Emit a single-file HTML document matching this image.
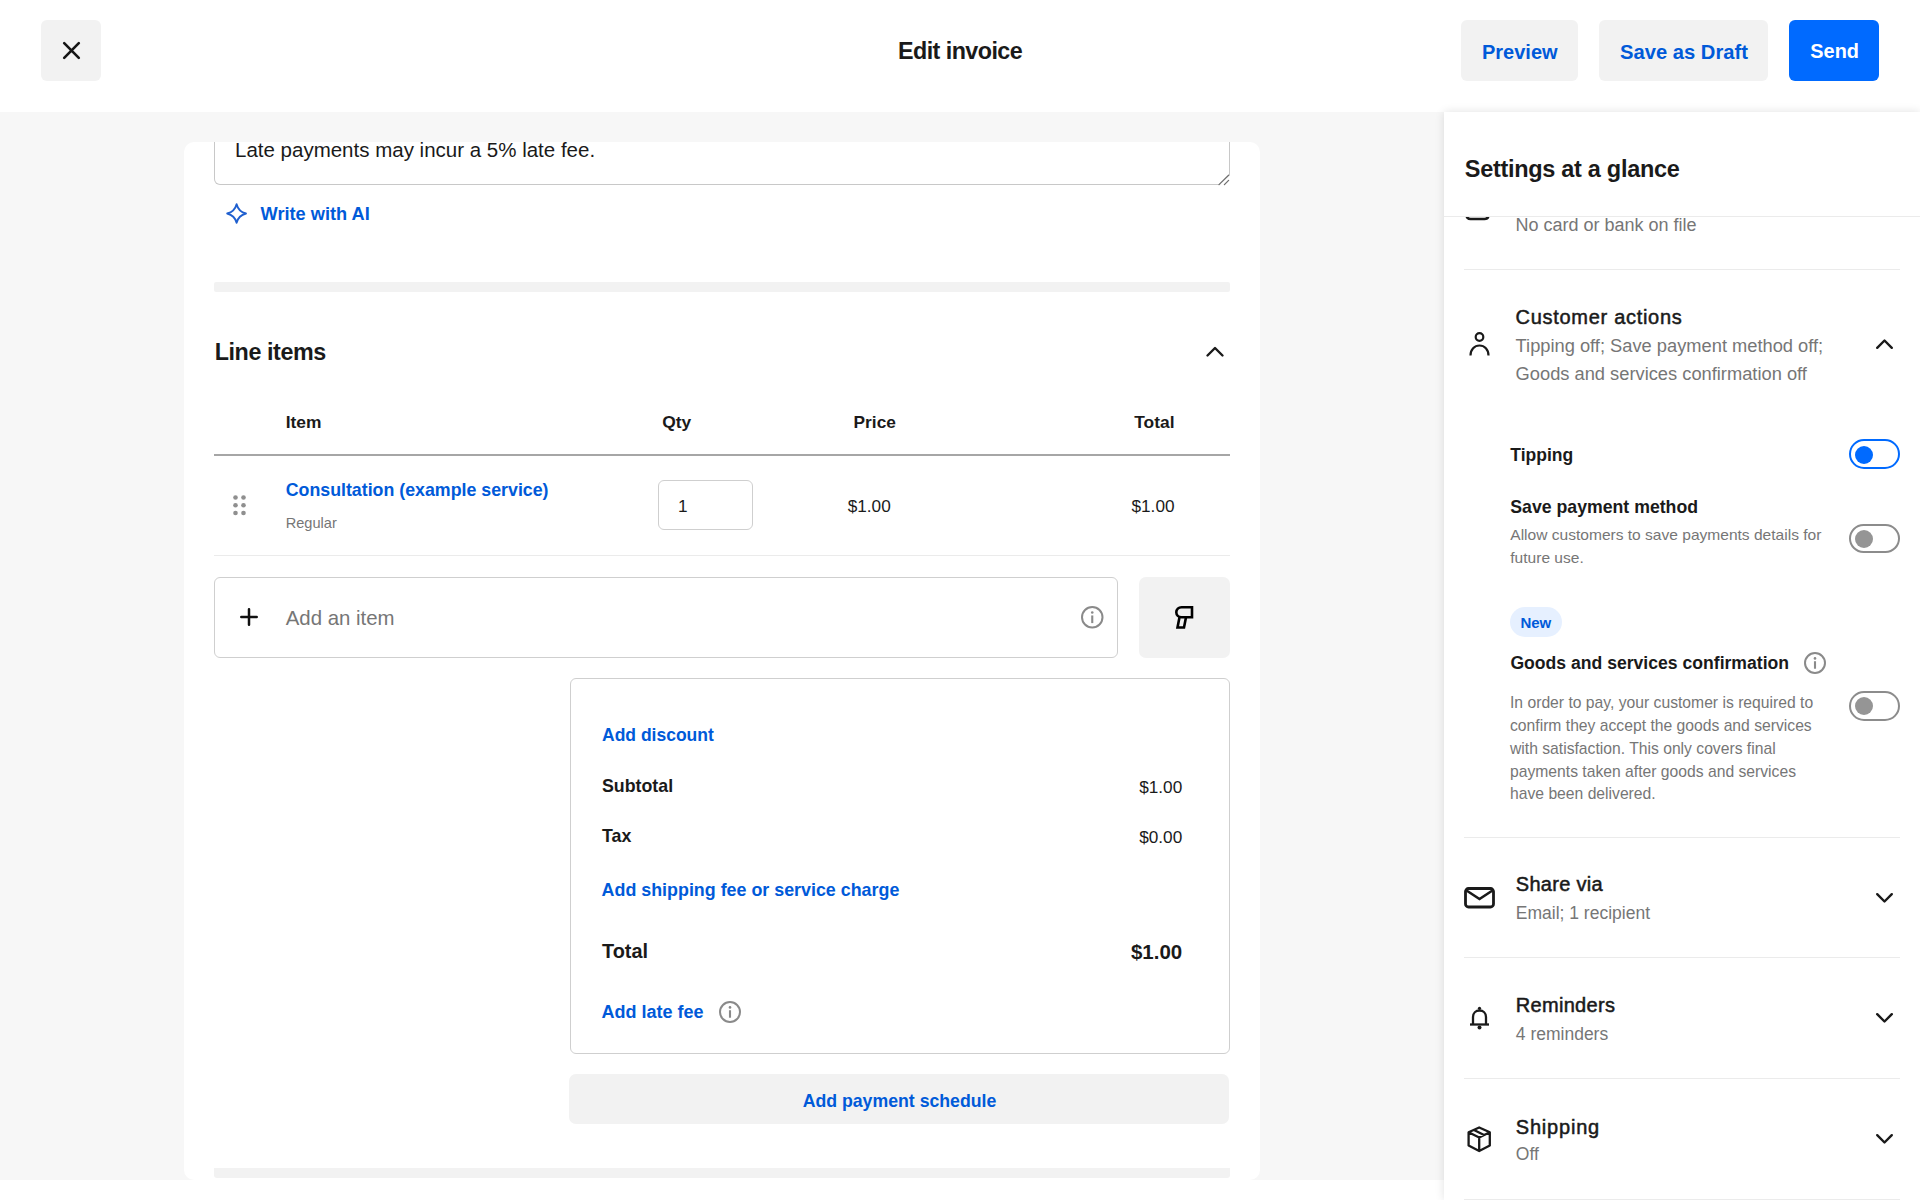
<!DOCTYPE html>
<html><head><meta charset="utf-8"><title>Edit invoice</title>
<style>
html,body{margin:0;padding:0;width:1920px;height:1200px;overflow:hidden;background:#fff;position:relative}
body{font-family:"Liberation Sans",sans-serif}
.t{position:absolute;white-space:nowrap;font-family:"Liberation Sans",sans-serif}
</style></head><body>
<div style="position:absolute;left:0px;top:0px;width:1920px;height:112px;background:#fff"></div>
<div style="position:absolute;left:41px;top:20px;width:60px;height:61px;background:#f2f2f2;border-radius:6px"></div>
<svg style="position:absolute;left:62.5px;top:42px;overflow:visible" width="17" height="17" viewBox="0 0 17 17"><path d="M1.2 1.2L15.8 15.8M15.8 1.2L1.2 15.8" stroke="#151515" stroke-width="2.6" fill="none" stroke-linecap="round"/></svg>
<div class="t" style="left:898.00px;top:39.98px;font-size:23.3px;line-height:23.3px;font-weight:700;color:#1a1a1a;letter-spacing:-0.55px">Edit invoice</div>
<div style="position:absolute;left:1461px;top:20px;width:117px;height:61px;background:#f2f2f2;border-radius:6px"></div>
<div class="t" style="left:1482.00px;top:41.77px;font-size:20px;line-height:20px;font-weight:700;color:#005ad9;">Preview</div>
<div style="position:absolute;left:1599px;top:20px;width:169px;height:61px;background:#f2f2f2;border-radius:6px"></div>
<div class="t" style="left:1620.00px;top:41.60px;font-size:20.2px;line-height:20.2px;font-weight:700;color:#005ad9;">Save as Draft</div>
<div style="position:absolute;left:1789px;top:20px;width:90px;height:61px;background:#006aff;border-radius:6px"></div>
<div class="t" style="left:1810.30px;top:41.85px;font-size:19.9px;line-height:19.9px;font-weight:700;color:#fff;">Send</div>
<div style="position:absolute;left:0px;top:112px;width:1444px;height:1068px;background:#f7f7f7"></div>
<div style="position:absolute;left:184px;top:142px;width:1076px;height:1038px;background:#fff;border-radius:10px"></div>
<div style="position:absolute;left:214px;top:130px;width:1016px;height:55px;border:1px solid #c8c8c8;border-top:none;border-radius:0 0 0 6px;box-sizing:border-box"></div>
<div style="position:absolute;left:184px;top:130px;width:1076px;height:12px;background:#f7f7f7"></div>
<svg style="position:absolute;left:1214px;top:170px;overflow:visible" width="17" height="17" viewBox="0 0 17 17"><path d="M16.5 4.5V17H3.5Z" fill="#fff"/><path d="M14.6 5.2L5 14.6M14.6 10.4L10.4 14.6" stroke="#6f6f6f" stroke-width="1.3" fill="none" stroke-linecap="round"/></svg>
<div class="t" style="left:235.00px;top:140.35px;font-size:20.5px;line-height:20.5px;font-weight:400;color:#1a1a1a;">Late payments may incur a 5% late fee.</div>
<svg style="position:absolute;left:226px;top:203px;overflow:visible" width="21" height="21" viewBox="0 0 21 21"><path d="M10.6 1.2 Q12.5 8.6 20 10.5 Q12.5 12.4 10.6 19.8 Q8.7 12.4 1.2 10.5 Q8.7 8.6 10.6 1.2Z" stroke="#1f5fcf" stroke-width="1.9" fill="none" stroke-linejoin="round"/></svg>
<div class="t" style="left:260.60px;top:204.89px;font-size:18.2px;line-height:18.2px;font-weight:700;color:#005ad9;">Write with AI</div>
<div style="position:absolute;left:214px;top:282px;width:1016px;height:10px;background:#f2f2f2;border-radius:2px"></div>
<div class="t" style="left:214.70px;top:340.98px;font-size:23.3px;line-height:23.3px;font-weight:700;color:#1a1a1a;letter-spacing:-0.4px">Line items</div>
<svg style="position:absolute;left:1206px;top:346px;overflow:visible" width="18" height="11" viewBox="0 0 18 11"><path d="M1.5 9.5L9 2L16.5 9.5" stroke="#1a1a1a" stroke-width="2.4" fill="none" stroke-linecap="round" stroke-linejoin="round"/></svg>
<div class="t" style="left:285.70px;top:413.97px;font-size:17.4px;line-height:17.4px;font-weight:700;color:#1a1a1a;">Item</div>
<div class="t" style="left:662.20px;top:413.97px;font-size:17.4px;line-height:17.4px;font-weight:700;color:#1a1a1a;">Qty</div>
<div class="t" style="left:853.60px;top:414.06px;font-size:17.3px;line-height:17.3px;font-weight:700;color:#1a1a1a;">Price</div>
<div class="t" style="right:745.50px;top:413.97px;font-size:17.4px;line-height:17.4px;font-weight:700;color:#1a1a1a;">Total</div>
<div style="position:absolute;left:214px;top:454px;width:1016px;height:2px;background:#a6a6a6"></div>
<svg style="position:absolute;left:233px;top:495px;overflow:visible" width="13" height="21" viewBox="0 0 13 21"><circle cx="2.5" cy="2.5" r="2.3" fill="#8f8f8f"/><circle cx="2.5" cy="10.300000000000011" r="2.3" fill="#8f8f8f"/><circle cx="2.5" cy="18" r="2.3" fill="#8f8f8f"/><circle cx="10.5" cy="2.5" r="2.3" fill="#8f8f8f"/><circle cx="10.5" cy="10.300000000000011" r="2.3" fill="#8f8f8f"/><circle cx="10.5" cy="18" r="2.3" fill="#8f8f8f"/></svg>
<div class="t" style="left:285.70px;top:481.93px;font-size:17.8px;line-height:17.8px;font-weight:700;color:#005ad9;">Consultation (example service)</div>
<div class="t" style="left:285.70px;top:516.34px;font-size:14.6px;line-height:14.6px;font-weight:400;color:#767676;">Regular</div>
<div style="position:absolute;left:658px;top:480px;width:95px;height:50px;border:1px solid #cfcfcf;border-radius:6px;box-sizing:border-box"></div>
<div class="t" style="left:678.00px;top:498.14px;font-size:17.2px;line-height:17.2px;font-weight:400;color:#1a1a1a;">1</div>
<div class="t" style="left:847.70px;top:498.14px;font-size:17.2px;line-height:17.2px;font-weight:400;color:#1a1a1a;">$1.00</div>
<div class="t" style="right:745.50px;top:497.64px;font-size:17.2px;line-height:17.2px;font-weight:400;color:#1a1a1a;">$1.00</div>
<div style="position:absolute;left:214px;top:555px;width:1016px;height:1px;background:#ebebeb"></div>
<div style="position:absolute;left:214px;top:577px;width:904px;height:81px;border:1px solid #cfcfcf;border-radius:6px;box-sizing:border-box"></div>
<svg style="position:absolute;left:240.3px;top:608px;overflow:visible" width="18" height="18" viewBox="0 0 18 18"><path d="M9 1.3V16.7M1.3 9H16.7" stroke="#111" stroke-width="2.5" fill="none" stroke-linecap="round"/></svg>
<div class="t" style="left:285.70px;top:608.43px;font-size:20.4px;line-height:20.4px;font-weight:400;color:#767676;">Add an item</div>
<svg style="position:absolute;left:1081.3px;top:605.8px;overflow:visible" width="22.5" height="22.5" viewBox="0 0 22.5 22.5"><circle cx="11.25" cy="11.25" r="10.25" stroke="#8a8a8a" stroke-width="2" fill="none"/><rect x="10.2" y="9.45" width="2.1" height="7.65" fill="#8a8a8a"/><circle cx="11.25" cy="6.5249999999999995" r="1.3" fill="#8a8a8a"/></svg>
<div style="position:absolute;left:1138.6px;top:576.6px;width:91.10000000000014px;height:81.0px;background:#f2f2f2;border-radius:7px"></div>
<svg style="position:absolute;left:1175px;top:606px;overflow:visible" width="18" height="23" viewBox="0 0 18 23"><path d="M17 1.2H6.5C3.6 1.2 1.3 3.4 1.3 6.2C1.3 9 3.6 11.2 6.5 11.2H17Z" stroke="#000" stroke-width="2.6" fill="none" stroke-linejoin="miter"/><path d="M4.5 11.2L2.5 21.5H9L11 11.2" stroke="#000" stroke-width="2.6" fill="none"/></svg>
<div style="position:absolute;left:570px;top:678px;width:660px;height:376px;border:1px solid #cfcfcf;border-radius:6px;box-sizing:border-box"></div>
<div class="t" style="left:602.00px;top:727.39px;font-size:17.5px;line-height:17.5px;font-weight:700;color:#005ad9;">Add discount</div>
<div class="t" style="left:602.00px;top:777.83px;font-size:17.8px;line-height:17.8px;font-weight:700;color:#1a1a1a;">Subtotal</div>
<div class="t" style="right:737.80px;top:778.84px;font-size:17.2px;line-height:17.2px;font-weight:400;color:#1a1a1a;">$1.00</div>
<div class="t" style="left:602.00px;top:828.43px;font-size:17.8px;line-height:17.8px;font-weight:700;color:#1a1a1a;">Tax</div>
<div class="t" style="right:737.80px;top:829.14px;font-size:17.2px;line-height:17.2px;font-weight:400;color:#1a1a1a;">$0.00</div>
<div class="t" style="left:601.60px;top:882.37px;font-size:17.87px;line-height:17.87px;font-weight:700;color:#005ad9;">Add shipping fee or service charge</div>
<div class="t" style="left:602.00px;top:942.45px;font-size:19.9px;line-height:19.9px;font-weight:700;color:#1a1a1a;">Total</div>
<div class="t" style="right:737.80px;top:941.85px;font-size:20.5px;line-height:20.5px;font-weight:700;color:#1a1a1a;">$1.00</div>
<div class="t" style="left:601.60px;top:1003.46px;font-size:18px;line-height:18px;font-weight:700;color:#005ad9;">Add late fee</div>
<svg style="position:absolute;left:719px;top:1000.7px;overflow:visible" width="22" height="22" viewBox="0 0 22 22"><circle cx="11.0" cy="11.0" r="10.0" stroke="#8a8a8a" stroke-width="2" fill="none"/><rect x="9.95" y="9.24" width="2.1" height="7.48" fill="#8a8a8a"/><circle cx="11.0" cy="6.38" r="1.3" fill="#8a8a8a"/></svg>
<div style="position:absolute;left:569.4px;top:1074.2px;width:659.9px;height:50.200000000000045px;background:#f2f2f2;border-radius:7px"></div>
<div class="t" style="left:802.70px;top:1092.52px;font-size:17.7px;line-height:17.7px;font-weight:700;color:#005ad9;">Add payment schedule</div>
<div style="position:absolute;left:214px;top:1168px;width:1016px;height:9.5px;background:#f2f2f2;border-radius:0 0 3px 3px"></div>
<div style="position:absolute;left:1444px;top:112px;width:476px;height:1088px;background:#fff;box-shadow:0 0 9px rgba(0,0,0,0.12)"></div>
<div class="t" style="left:1464.80px;top:158.01px;font-size:23.5px;line-height:23.5px;font-weight:700;color:#1a1a1a;letter-spacing:-0.3px">Settings at a glance</div>
<div style="position:absolute;left:1444px;top:216px;width:476px;height:1px;background:#ebebeb"></div>
<svg style="position:absolute;left:1465px;top:217px;overflow:hidden" width="25" height="4" viewBox="0 -0.5 25 4"><path d="M1.5 -3C1.5 0 3 1.5 5.5 1.5H19.5C22 1.5 23.5 0 23.5 -3" stroke="#1a1a1a" stroke-width="2.6" fill="none"/></svg>
<div class="t" style="left:1515.50px;top:216.36px;font-size:18px;line-height:18px;font-weight:400;color:#767676;">No card or bank on file</div>
<div style="position:absolute;left:1464px;top:269px;width:436px;height:1px;background:#ebebeb"></div>
<div class="t" style="left:1515.60px;top:306.77px;font-size:20px;line-height:20px;font-weight:400;color:#1a1a1a;-webkit-text-stroke:0.5px #1a1a1a;letter-spacing:0.7px">Customer actions</div>
<div class="t" style="left:1515.60px;top:337.11px;font-size:18.3px;line-height:18.3px;font-weight:400;color:#767676;">Tipping off; Save payment method off;</div>
<div class="t" style="left:1515.60px;top:364.61px;font-size:18.3px;line-height:18.3px;font-weight:400;color:#767676;">Goods and services confirmation off</div>
<svg style="position:absolute;left:1469px;top:332px;overflow:visible" width="21" height="24" viewBox="0 0 21 24"><circle cx="10.5" cy="5" r="3.8" stroke="#1a1a1a" stroke-width="2.2" fill="none"/><path d="M1.5 23.5C1.5 17.5 5.5 13.5 10.5 13.5C15.5 13.5 19.5 17.5 19.5 23.5" stroke="#1a1a1a" stroke-width="2.2" fill="none"/></svg>
<svg style="position:absolute;left:1876px;top:338px;overflow:visible" width="17" height="11" viewBox="0 0 17 11"><path d="M1.2 9.8L8.5 2.5L15.8 9.8" stroke="#1a1a1a" stroke-width="2.4" fill="none" stroke-linecap="round" stroke-linejoin="round"/></svg>
<div class="t" style="left:1510.30px;top:446.89px;font-size:17.5px;line-height:17.5px;font-weight:700;color:#1a1a1a;">Tipping</div>
<div style="position:absolute;left:1849.4px;top:439.4px;width:50.19999999999982px;height:29.80000000000001px;border:2.8px solid #006aff;border-radius:15px;box-sizing:border-box"></div>
<div style="position:absolute;left:1855px;top:445.5px;width:18px;height:18.0px;background:#006aff;border-radius:50%"></div>
<div class="t" style="left:1510.30px;top:499.12px;font-size:17.7px;line-height:17.7px;font-weight:700;color:#1a1a1a;">Save payment method</div>
<div class="t" style="left:1510.30px;top:527.23px;font-size:15.56px;line-height:15.56px;font-weight:400;color:#767676;">Allow customers to save payments details for</div>
<div class="t" style="left:1510.30px;top:549.63px;font-size:15.56px;line-height:15.56px;font-weight:400;color:#767676;">future use.</div>
<div style="position:absolute;left:1849.4px;top:523.5px;width:50.19999999999982px;height:29.799999999999955px;border:2.8px solid #8c8c8c;border-radius:15px;box-sizing:border-box"></div>
<div style="position:absolute;left:1855px;top:529.5999999999999px;width:18px;height:18.0px;background:#959595;border-radius:50%"></div>
<div style="position:absolute;left:1510px;top:607px;width:52px;height:30px;background:#e6f0ff;border-radius:15px"></div>
<div class="t" style="left:1520.40px;top:615.40px;font-size:15px;line-height:15px;font-weight:700;color:#005ad9;">New</div>
<div class="t" style="left:1510.40px;top:654.50px;font-size:17.6px;line-height:17.6px;font-weight:700;color:#1a1a1a;">Goods and services confirmation</div>
<svg style="position:absolute;left:1804px;top:651.7px;overflow:visible" width="22" height="22" viewBox="0 0 22 22"><circle cx="11.0" cy="11.0" r="10.0" stroke="#8a8a8a" stroke-width="2" fill="none"/><rect x="9.95" y="9.24" width="2.1" height="7.48" fill="#8a8a8a"/><circle cx="11.0" cy="6.38" r="1.3" fill="#8a8a8a"/></svg>
<div class="t" style="left:1510.00px;top:695.21px;font-size:15.7px;line-height:15.7px;font-weight:400;color:#767676;">In order to pay, your customer is required to</div>
<div class="t" style="left:1510.00px;top:718.01px;font-size:15.7px;line-height:15.7px;font-weight:400;color:#767676;">confirm they accept the goods and services</div>
<div class="t" style="left:1510.00px;top:740.71px;font-size:15.7px;line-height:15.7px;font-weight:400;color:#767676;">with satisfaction. This only covers final</div>
<div class="t" style="left:1510.00px;top:763.61px;font-size:15.7px;line-height:15.7px;font-weight:400;color:#767676;">payments taken after goods and services</div>
<div class="t" style="left:1510.00px;top:786.01px;font-size:15.7px;line-height:15.7px;font-weight:400;color:#767676;">have been delivered.</div>
<div style="position:absolute;left:1849.4px;top:691.2px;width:50.19999999999982px;height:29.799999999999955px;border:2.8px solid #8c8c8c;border-radius:15px;box-sizing:border-box"></div>
<div style="position:absolute;left:1855px;top:697.3px;width:18px;height:18.0px;background:#959595;border-radius:50%"></div>
<div style="position:absolute;left:1464px;top:837px;width:436px;height:1px;background:#ebebeb"></div>
<div class="t" style="left:1515.80px;top:874.27px;font-size:20px;line-height:20px;font-weight:400;color:#1a1a1a;-webkit-text-stroke:0.5px #1a1a1a;letter-spacing:0.3px">Share via</div>
<div class="t" style="left:1515.80px;top:905.09px;font-size:17.5px;line-height:17.5px;font-weight:400;color:#767676;">Email; 1 recipient</div>
<svg style="position:absolute;left:1464px;top:887px;overflow:visible" width="31" height="22" viewBox="0 0 31 22"><rect x="1.5" y="1.5" width="28" height="18.5" rx="3" stroke="#1a1a1a" stroke-width="2.8" fill="none"/><path d="M2.5 3.5L15.5 12L28.5 3.5" stroke="#1a1a1a" stroke-width="2.6" fill="none"/></svg>
<svg style="position:absolute;left:1876px;top:892.5px;overflow:visible" width="17" height="11" viewBox="0 0 17 11"><path d="M1.2 1.2L8.5 8.5L15.8 1.2" stroke="#1a1a1a" stroke-width="2.4" fill="none" stroke-linecap="round" stroke-linejoin="round"/></svg>
<div style="position:absolute;left:1464px;top:957px;width:436px;height:1px;background:#ebebeb"></div>
<div class="t" style="left:1515.80px;top:995.07px;font-size:20px;line-height:20px;font-weight:400;color:#1a1a1a;-webkit-text-stroke:0.5px #1a1a1a;letter-spacing:0.3px">Reminders</div>
<div class="t" style="left:1515.80px;top:1025.59px;font-size:17.5px;line-height:17.5px;font-weight:400;color:#767676;">4 reminders</div>
<svg style="position:absolute;left:1469px;top:1006px;overflow:visible" width="21" height="25" viewBox="0 0 21 25"><path d="M4 18.5V11C4 7 6.8 4.5 10.5 4.5C14.2 4.5 17 7 17 11V18.5" stroke="#1a1a1a" stroke-width="2.3" fill="none"/><path d="M1 18.5H20" stroke="#1a1a1a" stroke-width="2.3"/><circle cx="10.5" cy="2.3" r="1.6" fill="#1a1a1a"/><circle cx="10.5" cy="21.5" r="2" fill="#1a1a1a"/></svg>
<svg style="position:absolute;left:1876px;top:1013.2px;overflow:visible" width="17" height="11" viewBox="0 0 17 11"><path d="M1.2 1.2L8.5 8.5L15.8 1.2" stroke="#1a1a1a" stroke-width="2.4" fill="none" stroke-linecap="round" stroke-linejoin="round"/></svg>
<div style="position:absolute;left:1464px;top:1078px;width:436px;height:1px;background:#ebebeb"></div>
<div class="t" style="left:1515.80px;top:1116.67px;font-size:20px;line-height:20px;font-weight:400;color:#1a1a1a;-webkit-text-stroke:0.5px #1a1a1a;letter-spacing:0.8px">Shipping</div>
<div class="t" style="left:1515.80px;top:1145.89px;font-size:17.5px;line-height:17.5px;font-weight:400;color:#767676;">Off</div>
<svg style="position:absolute;left:1467px;top:1126px;overflow:visible" width="25" height="27" viewBox="0 0 25 27"><path d="M12.2 1.5L22.8 6.3V19.5L12.2 25L1.6 19.5V6.3Z M1.6 6.3L12.2 11.5L22.8 6.3 M12.2 11.5V25 M6.5 3.8L17 9" stroke="#1a1a1a" stroke-width="2.3" fill="none" stroke-linejoin="round"/></svg>
<svg style="position:absolute;left:1876px;top:1133.5px;overflow:visible" width="17" height="11" viewBox="0 0 17 11"><path d="M1.2 1.2L8.5 8.5L15.8 1.2" stroke="#1a1a1a" stroke-width="2.4" fill="none" stroke-linecap="round" stroke-linejoin="round"/></svg>
<div style="position:absolute;left:1464px;top:1199px;width:436px;height:1px;background:#ebebeb"></div>
</body></html>
